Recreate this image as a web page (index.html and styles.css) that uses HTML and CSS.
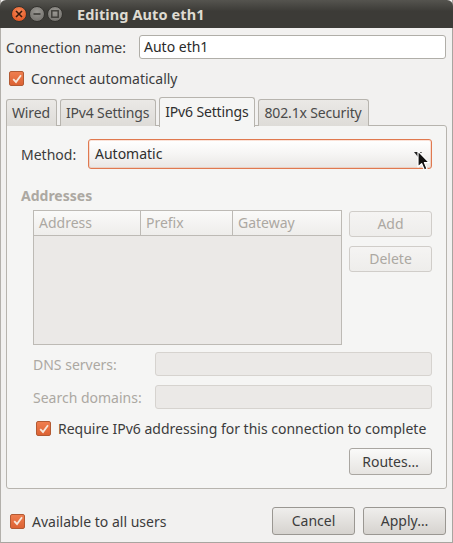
FILE: index.html
```html
<!DOCTYPE html>
<html>
<head>
<meta charset="utf-8">
<link rel="stylesheet" href="styles.css">
</head>
<body>
<div class="window">
  <div class="titlebar">
    <div class="wbtns">
      <span class="wbtn close"><svg width="8" height="8" viewBox="0 0 8 8"><path d="M1 1L7 7M7 1L1 7" stroke="#3a1a0c" stroke-width="1.6"/></svg></span>
      <span class="wbtn"><svg width="8" height="8" viewBox="0 0 8 8"><path d="M0.5 4H7.5" stroke="#3c3b37" stroke-width="1.6"/></svg></span>
      <span class="wbtn"><svg width="8" height="8" viewBox="0 0 8 8"><rect x="0.8" y="0.8" width="6.4" height="6.4" fill="none" stroke="#3c3b37" stroke-width="1.4"/></svg></span>
    </div>
    <div class="title">Editing Auto eth1</div>
  </div>

  <div class="content">
    <div class="row name-row">
      <span class="label">Connection name:</span>
      <div class="entry">Auto eth1</div>
    </div>
    <div class="check-row top-check">
      <span class="cb"><svg width="12" height="12" viewBox="0 0 12 12"><path d="M2.2 6.2L5 9L10 2.2" fill="none" stroke="#f6e8dc" stroke-width="1.8"/></svg></span>
      <span class="label">Connect automatically</span>
    </div>

    <div class="tabs">
      <div class="tab">Wired</div>
      <div class="tab">IPv4 Settings</div>
      <div class="tab active">IPv6 Settings</div>
      <div class="tab">802.1x Security</div>
    </div>
    <div class="panel">
      <div class="method-row">
        <span class="label">Method:</span>
        <div class="combo">
          <span>Automatic</span>
          <span class="arrow"></span>
        </div>
      </div>
      <div class="section-title">Addresses</div>
      <div class="addr-block">
        <div class="table">
          <div class="thead">
            <div class="th c1">Address</div>
            <div class="th c2">Prefix</div>
            <div class="th c3">Gateway</div>
          </div>
          <div class="tbody"></div>
        </div>
        <div class="side-btns">
          <div class="btn disabled">Add</div>
          <div class="btn disabled">Delete</div>
        </div>
      </div>
      <div class="field-row first">
        <span class="dlabel">DNS servers:</span>
        <div class="dentry"></div>
      </div>
      <div class="field-row">
        <span class="dlabel">Search domains:</span>
        <div class="dentry"></div>
      </div>
      <div class="check-row req-check">
        <span class="cb"><svg width="12" height="12" viewBox="0 0 12 12"><path d="M2.2 6.2L5 9L10 2.2" fill="none" stroke="#f6e8dc" stroke-width="1.8"/></svg></span>
        <span class="label">Require IPv6 addressing for this connection to complete</span>
      </div>
      <div class="routes-row">
        <div class="btn">Routes…</div>
      </div>
    </div>

    <div class="bottom-row">
      <div class="check-row">
        <span class="cb"><svg width="12" height="12" viewBox="0 0 12 12"><path d="M2.2 6.2L5 9L10 2.2" fill="none" stroke="#f6e8dc" stroke-width="1.8"/></svg></span>
        <span class="label">Available to all users</span>
      </div>
      <div class="dlg-btns">
        <div class="btn dark">Cancel</div>
        <div class="btn dark">Apply…</div>
      </div>
    </div>
  </div>

  <svg class="cursor" width="14" height="22" viewBox="0 0 14 22"><path d="M1 1V17L4.6 13.6L7.4 20L10 18.8L7.4 12.6H12.2Z" fill="#111" stroke="#fff" stroke-width="1.2" stroke-linejoin="round"/></svg>
</div>
</body>
</html>
```

FILE: styles.css
```css
* { box-sizing: border-box; }
html, body { margin: 0; padding: 0; }
body {
  width: 453px;
  height: 543px;
  font-family: "Noto Sans", "DejaVu Sans", sans-serif;
  font-size: 14px;
  color: #3c3c3c;
  background: #f2f1f0;
  overflow: hidden;
}
.window {
  position: relative;
  width: 453px;
  height: 543px;
  background: #f2f1f0;
  border-left: 1px solid #b3b0ab;
  border-right: 1px solid #a8a5a0;
  border-bottom: 1px solid #a8a5a0;
}
.titlebar {
  height: 28px;
  margin: 0 -1px;
  background: linear-gradient(#55544f, #3c3b37 40%, #3c3b37);
  border-top-right-radius: 6px;
  border-top-left-radius: 6px;
  display: flex;
  align-items: center;
  padding-left: 11px;
}
.wbtns { display: flex; gap: 2px; }
.wbtn {
  width: 16px;
  height: 16px;
  border-radius: 50%;
  background: radial-gradient(circle at 50% 35%, #9a9893, #6c6a66);
  display: flex;
  align-items: center;
  justify-content: center;
  border: 1px solid #34332f;
}
.wbtn.close { background: radial-gradient(circle at 50% 35%, #f68b5b, #df4a16); }
.title {
  margin-left: 14px;
  font-weight: bold;
  font-size: 14.5px;
  color: #dfdbd2;
  letter-spacing: 0.1px;
}
.content { padding: 0 6px 0 5px; }
.row { display: flex; align-items: center; }
.name-row { margin-top: 7px; justify-content: space-between; }
.entry {
  width: 307px;
  height: 24px;
  background: #fff;
  border: 1px solid #b0aea8;
  border-radius: 3px;
  padding: 0 4px;
  line-height: 22px;
  color: #2a2a2a;
}
.check-row { display: flex; align-items: center; gap: 7px; }
.top-check { margin-top: 10px; padding-left: 3px; }
.cb {
  width: 15px;
  height: 15px;
  border-radius: 2px;
  border: 1px solid #b25a33;
  background: linear-gradient(#ef7e4f, #dc6233);
  display: flex;
  align-items: center;
  justify-content: center;
  flex: none;
}
.tabs {
  display: flex;
  align-items: flex-end;
  gap: 3px;
  margin-top: 9px;
  height: 29px;
  position: relative;
  z-index: 1;
}
.tab {
  height: 27px;
  padding: 0 6px 0 5px;
  line-height: 26px;
  background: linear-gradient(#ebe9e6, #dedcd8);
  border: 1px solid #b7b4ae;
  border-bottom: none;
  border-radius: 3px 3px 0 0;
  color: #4a4a4a;
  letter-spacing: -0.15px;
}
.tab.active {
  height: 30px;
  line-height: 28px;
  background: #f5f5f4;
  color: #2e2e2e;
  margin-bottom: -1px;
}
.panel {
  width: 441px;
  height: 364px;
  margin-top: -1px;
  background: #f5f5f4;
  border: 1px solid #b7b4ae;
  border-radius: 0 3px 3px 3px;
  padding: 13px 14px 0 14px;
}
.method-row { display: flex; align-items: center; justify-content: space-between; }
.combo {
  position: relative;
  width: 344px;
  height: 30px;
  border: 1px solid #e0794f;
  border-radius: 3px;
  background: linear-gradient(#ffffff, #f6f5f4 50%, #e9e7e4);
  box-shadow: inset 0 0 0 1px rgba(240,140,100,0.25);
  padding-left: 6px;
  line-height: 28px;
  color: #2e2e2e;
}
.arrow {
  position: absolute;
  right: 9px;
  top: 12px;
  width: 0; height: 0;
  border-left: 4px solid transparent;
  border-right: 4px solid transparent;
  border-top: 5px solid #222;
}
.section-title {
  margin-top: 17px;
  font-weight: bold;
  color: #aca8a2;
}
.addr-block {
  display: flex;
  gap: 7px;
  margin-top: 5px;
  padding-left: 12px;
}
.table {
  width: 310px;
  height: 135px;
  border: 1px solid #bdbab5;
  display: flex;
  flex-direction: column;
}
.thead {
  display: flex;
  height: 25px;
  background: linear-gradient(#fafaf9, #eeedeb);
  border-bottom: 1px solid #bdbab5;
}
.th {
  padding-left: 5px;
  line-height: 24px;
  color: #aca8a2;
  border-right: 1px solid #bdbab5;
}
.c1 { width: 107px; }
.c2 { width: 92px; }
.c3 { flex: 1; border-right: none; }
.tbody { flex: 1; background: #ebe9e7; }
.side-btns { display: flex; flex-direction: column; gap: 9px; padding-top: 1px; }
.btn {
  width: 83px;
  height: 27px;
  border: 1px solid #a9a6a1;
  border-radius: 3px;
  background: linear-gradient(#fafaf9, #e6e4e1);
  text-align: center;
  line-height: 25px;
  color: #3c3c3c;
}
.btn.disabled {
  height: 26px;
  border-color: #d0cdc9;
  background: linear-gradient(#f5f4f3, #eeedeb);
  color: #aca8a2;
  line-height: 24px;
}
.field-row {
  display: flex;
  align-items: center;
  justify-content: space-between;
  padding-left: 12px;
  margin-top: 9px;
}
.field-row.first { margin-top: 7px; }
.dlabel { color: #aca8a2; }
.dentry {
  width: 277px;
  height: 24px;
  border: 1px solid #d6d3cf;
  border-radius: 3px;
  background: #ebe9e7;
}
.req-check { margin-top: 10px; padding-left: 15px; }
.routes-row { display: flex; justify-content: flex-end; margin-top: 10px; }
.bottom-row {
  display: flex;
  align-items: center;
  justify-content: space-between;
  margin-top: 18px;
  padding-left: 4px;
}
.dlg-btns { display: flex; gap: 8px; }
.btn.dark {
  height: 28px;
  line-height: 26px;
  border-color: #9a9792;
  background: linear-gradient(#efeeec, #d6d3cf);
}
.cursor { position: absolute; left: 416px; top: 150px; }
```
